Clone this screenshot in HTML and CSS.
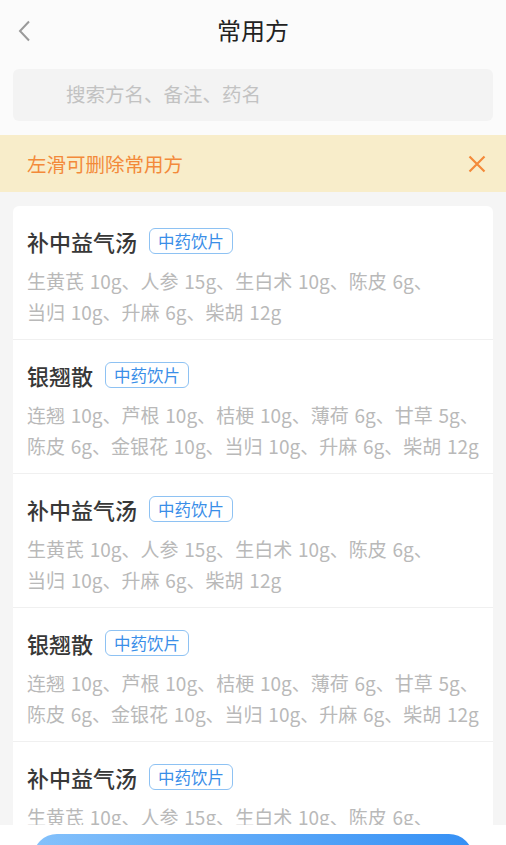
FILE: index.html
```html
<!DOCTYPE html>
<html lang="zh-CN">
<head>
  <meta charset="UTF-8" />
  <meta name="viewport" content="width=device-width, initial-scale=1.0"/>
  <title>常用方</title>
  <link rel="stylesheet" href="styles.css">
</head>
<body>
  <div class="page">
    <div class="top">
      <div class="nav">
        <a href="#" class="back">
          <svg width="14" height="22" viewBox="0 0 14 22"><path d="M12 1.5 L3 11 L12 20.5" fill="none" stroke="#9a9a9a" stroke-width="2"/></svg>
        </a>
        <h1>常用方</h1>
      </div>
      <div class="search">
        <input type="text" placeholder="搜索方名、备注、药名" />
      </div>
    </div>

    <div class="notice">
      <span>左滑可删除常用方</span>
      <svg width="18" height="18" viewBox="0 0 18 18"><path d="M1.5 1.5 L16.5 16.5 M16.5 1.5 L1.5 16.5" stroke="#f38a3a" stroke-width="2.2" fill="none"/></svg>
    </div>

    <div class="list">
      <div class="card">
        <div class="item">
          <div class="item-head"><span class="name">补中益气汤</span><span class="tag">中药饮片</span></div>
          <p class="herbs"><span>生黄芪 10g、</span><span>人参 15g、</span><span>生白术 10g、</span><span>陈皮 6g、</span><span>当归 10g、</span><span>升麻 6g、</span><span>柴胡 12g</span></p>
        </div>
        <div class="item">
          <div class="item-head"><span class="name">银翘散</span><span class="tag">中药饮片</span></div>
          <p class="herbs"><span>连翘 10g、</span><span>芦根 10g、</span><span>桔梗 10g、</span><span>薄荷 6g、</span><span>甘草 5g、</span><span>陈皮 6g、</span><span>金银花 10g、</span><span>当归 10g、</span><span>升麻 6g、</span><span>柴胡 12g</span></p>
        </div>
        <div class="item">
          <div class="item-head"><span class="name">补中益气汤</span><span class="tag">中药饮片</span></div>
          <p class="herbs"><span>生黄芪 10g、</span><span>人参 15g、</span><span>生白术 10g、</span><span>陈皮 6g、</span><span>当归 10g、</span><span>升麻 6g、</span><span>柴胡 12g</span></p>
        </div>
        <div class="item">
          <div class="item-head"><span class="name">银翘散</span><span class="tag">中药饮片</span></div>
          <p class="herbs"><span>连翘 10g、</span><span>芦根 10g、</span><span>桔梗 10g、</span><span>薄荷 6g、</span><span>甘草 5g、</span><span>陈皮 6g、</span><span>金银花 10g、</span><span>当归 10g、</span><span>升麻 6g、</span><span>柴胡 12g</span></p>
        </div>
        <div class="item">
          <div class="item-head"><span class="name">补中益气汤</span><span class="tag">中药饮片</span></div>
          <p class="herbs"><span>生黄芪 10g、</span><span>人参 15g、</span><span>生白术 10g、</span><span>陈皮 6g、</span><span>当归 10g、</span><span>升麻 6g、</span><span>柴胡 12g</span></p>
        </div>
      </div>
    </div>

    <div class="footer">
      <button type="button" class="add-btn" aria-label="添加常用方"></button>
    </div>
  </div>
</body>
</html>
```

FILE: styles.css
```css
* {
  box-sizing: border-box;
  font-family: 'Noto Sans CJK SC', 'Noto Sans', sans-serif;
}

body {
  margin: 0;
  background: #f5f5f5;
}

.page {
  height: 100vh;
  display: flex;
  flex-direction: column;
  overflow: hidden;
}

.top {
  background: #fbfbfb;
  padding-bottom: 14px;
}

.nav {
  height: 61px;
  padding-bottom: 3px;
  display: flex;
  align-items: center;
  justify-content: center;
  position: relative;
}

.back {
  position: absolute;
  left: 17px;
  top: 20px;
  display: flex;
}

h1 {
  margin: 0;
  font-size: 24px;
  font-weight: 400;
  color: #222;
}

.search {
  margin: 8px 13px 0;
}

.search input {
  width: 100%;
  height: 52px;
  border: none;
  border-radius: 6px;
  background: #f3f3f3;
  padding: 0 0 3px 53px;
  font-size: 19.5px;
  color: #333;
  outline: none;
}

.search input::placeholder {
  color: #c2c2c2;
}

.notice {
  height: 57px;
  background: #f8edca;
  display: flex;
  align-items: center;
  justify-content: space-between;
  padding: 0 20px 0 27px;
  color: #f38a3a;
  font-size: 19.5px;
}

.list {
  flex: 1;
  overflow: hidden;
  padding: 14px 13px 0;
}

.card {
  background: #fff;
  border-radius: 6px;
}

.item {
  padding: 19px 12px 13px 14px;
  border-bottom: 1px solid #f0f0f0;
  height: 134px;
}

.item-head {
  display: flex;
  align-items: center;
  gap: 12px;
  height: 32px;
}

.name {
  font-size: 22px;
  font-weight: 500;
  color: #383838;
}

.tag {
  border: 1px solid #8ec2f3;
  border-radius: 6px;
  color: #3a8ee8;
  font-size: 16.5px;
  line-height: 24px;
  padding: 0 8px;
}

.herbs {
  margin: 8px 0 0;
  font-size: 19px;
  line-height: 31px;
  color: #b9b9b9;
  word-spacing: 1.5px;
}

.herbs span {
  white-space: nowrap;
}

.footer {
  height: 20px;
  background: #fff;
  padding: 9px 33px 0;
  overflow: hidden;
  flex-shrink: 0;
}

.add-btn {
  width: 100%;
  height: 48px;
  border: none;
  border-radius: 24px;
  background: linear-gradient(90deg, #84c1fb, #3590f5);
  cursor: pointer;
}
```
